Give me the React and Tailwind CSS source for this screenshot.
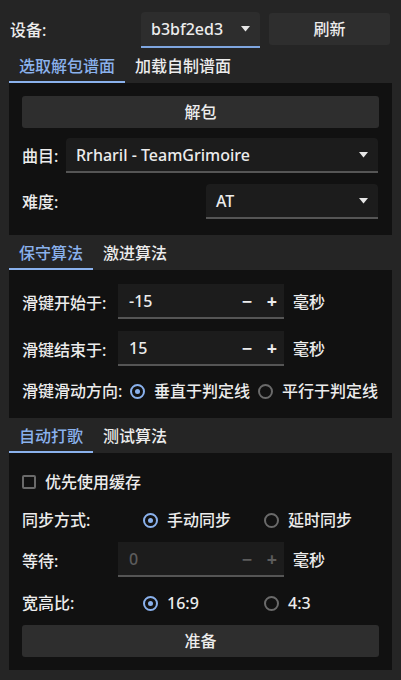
import React from 'react';

const FONT = { fontFamily: '"Noto Sans", "Noto Sans CJK SC", sans-serif' };

function Caret() {
  return (
    <svg width="9" height="6" viewBox="0 0 9 6" className="shrink-0">
      <polygon points="0,0 9,0 4.5,5.5" fill="#e6e6e6" />
    </svg>
  );
}

function Combo({ value, className = '', accent = false }) {
  return (
    <div
      className={`flex items-center justify-between pl-[10px] pr-[10px] rounded-t-[4px] border-b-2 ${
        accent ? 'bg-[#2d2d2d] border-[#7fa6e0]' : 'bg-[#1c1c1c] border-[#555555]'
      } ${className}`}
    >
      <span className="text-[16px] text-[#ececec] leading-none">{value}</span>
      <Caret />
    </div>
  );
}

function Tabs({ items, width }) {
  return (
    <div className="flex items-end h-[35px] pl-[9px]">
      {items.map((t, i) => (
        <div
          key={t}
          className={`h-full flex items-center text-[16px] ${
            i === 0 ? 'text-[#8ab1ec] border-b-[2px] border-[#8ab1ec] justify-center' : 'text-[#ececec] pl-[10px] border-b-[2px] border-transparent'
          }`}
          style={i === 0 ? { width } : undefined}
        >
          <span className="pt-[2px]">{t}</span>
        </div>
      ))}
    </div>
  );
}

function Panel({ children, className = '' }) {
  return <div className={`mx-[9px] bg-[#111111] px-[13px] ${className}`}>{children}</div>;
}

function Button({ label }) {
  return (
    <div className="h-[32px] bg-[#2e2e2e] rounded-[3px] flex items-center justify-center text-[16px] text-[#ececec]">
      {label}
    </div>
  );
}

function Stepper({ value, disabled = false }) {
  const c = disabled ? 'text-[#5c5c5c]' : 'text-[#ececec]';
  return (
    <div className="flex items-center">
      <div className="ml-[96px] w-[166px] h-[35px] bg-[#1c1c1c] border-b-2 border-[#555555] flex items-center pl-[11px] pr-[4px]">
        <span className={`flex-1 text-[16px] leading-none ${c}`}>{value}</span>
        <span className={`w-[16px] text-center text-[18px] leading-none font-bold ${c}`}>−</span>
        <span className={`ml-[9px] w-[16px] text-center text-[18px] leading-none font-bold ${c}`}>+</span>
      </div>
      <span className="ml-[9px] text-[16px] text-[#ececec]">毫秒</span>
    </div>
  );
}

function Radio({ on }) {
  return (
    <span
      className={`w-[15px] h-[15px] rounded-full border-2 flex items-center justify-center shrink-0 ${
        on ? 'border-[#8ab1ec]' : 'border-[#6a6a6a]'
      }`}
    >
      {on && <span className="w-[5px] h-[5px] rounded-full bg-[#8ab1ec]" />}
    </span>
  );
}

function RadioRow({ label, a, b }) {
  return (
    <div className="flex items-center h-[24px] text-[16px] text-[#ececec]">
      <span className="w-[121px]">{label}</span>
      <span className="w-[121px] flex items-center gap-[9px]">
        <Radio on />
        <span>{a}</span>
      </span>
      <span className="flex items-center gap-[9px]">
        <Radio />
        <span>{b}</span>
      </span>
    </div>
  );
}

export default function App() {
  return (
    <div className="w-[401px] h-[680px] bg-[#252525] overflow-hidden font-medium" style={FONT}>
      {/* device row */}
      <div className="flex items-center pt-[11px] h-[48px]">
        <span className="pl-[10px] w-[141px] text-[16px] text-[#ececec]">设备:</span>
        <Combo value="b3bf2ed3" accent className="w-[119px] h-[36px]" />
        <div className="ml-[9px] w-[121px] h-[32px] bg-[#2e2e2e] rounded-[3px] flex items-center justify-center text-[16px] text-[#ececec] -mt-[2px]">
          刷新
        </div>
      </div>

      <Tabs items={['选取解包谱面', '加载自制谱面']} width={116} />
      <Panel className="pt-[13px] pb-[16px]">
        <Button label="解包" />
        <div className="flex items-center mt-[10px]">
          <span className="w-[44px] text-[16px] text-[#ececec]">曲目:</span>
          <Combo value="Rrharil - TeamGrimoire" className="flex-1 h-[35px] mr-[1px]" />
        </div>
        <div className="flex items-center mt-[11px]">
          <span className="w-[184px] text-[16px] text-[#ececec]">难度:</span>
          <Combo value="AT" className="flex-1 h-[35px] mr-[1px]" />
        </div>
      </Panel>

      <Tabs items={['保守算法', '激进算法']} width={84} />
      <Panel className="pt-[14px] pb-[15px]">
        <div className="relative">
          <span className="absolute left-0 top-[7px] text-[16px] text-[#ececec]">滑键开始于:</span>
          <Stepper value="-15" />
        </div>
        <div className="relative mt-[12px]">
          <span className="absolute left-0 top-[7px] text-[16px] text-[#ececec]">滑键结束于:</span>
          <Stepper value="15" />
        </div>
        <div className="flex items-center h-[24px] mt-[13px] text-[16px] text-[#ececec]">
          <span className="w-[108px]">滑键滑动方向:</span>
          <span className="flex items-center gap-[9px]">
            <Radio on />
            <span>垂直于判定线</span>
          </span>
          <span className="ml-[8px] flex items-center gap-[9px]">
            <Radio />
            <span>平行于判定线</span>
          </span>
        </div>
      </Panel>

      <Tabs items={['自动打歌', '测试算法']} width={84} />
      <Panel className="pt-[17px] pb-[13px]">
        <div className="flex items-center h-[24px] gap-[9px] text-[16px] text-[#ececec]">
          <span className="w-[14px] h-[14px] border-2 border-[#6a6a6a] rounded-[2px]" />
          <span>优先使用缓存</span>
        </div>
        <div className="mt-[14px]">
          <RadioRow label="同步方式:" a="手动同步" b="延时同步" />
        </div>
        <div className="relative mt-[10px]">
          <span className="absolute left-0 top-[7px] text-[16px] text-[#ececec]">等待:</span>
          <Stepper value="0" disabled />
        </div>
        <div className="mt-[14px]">
          <RadioRow label="宽高比:" a="16:9" b="4:3" />
        </div>
        <div className="mt-[10px]">
          <Button label="准备" />
        </div>
      </Panel>
    </div>
  );
}
